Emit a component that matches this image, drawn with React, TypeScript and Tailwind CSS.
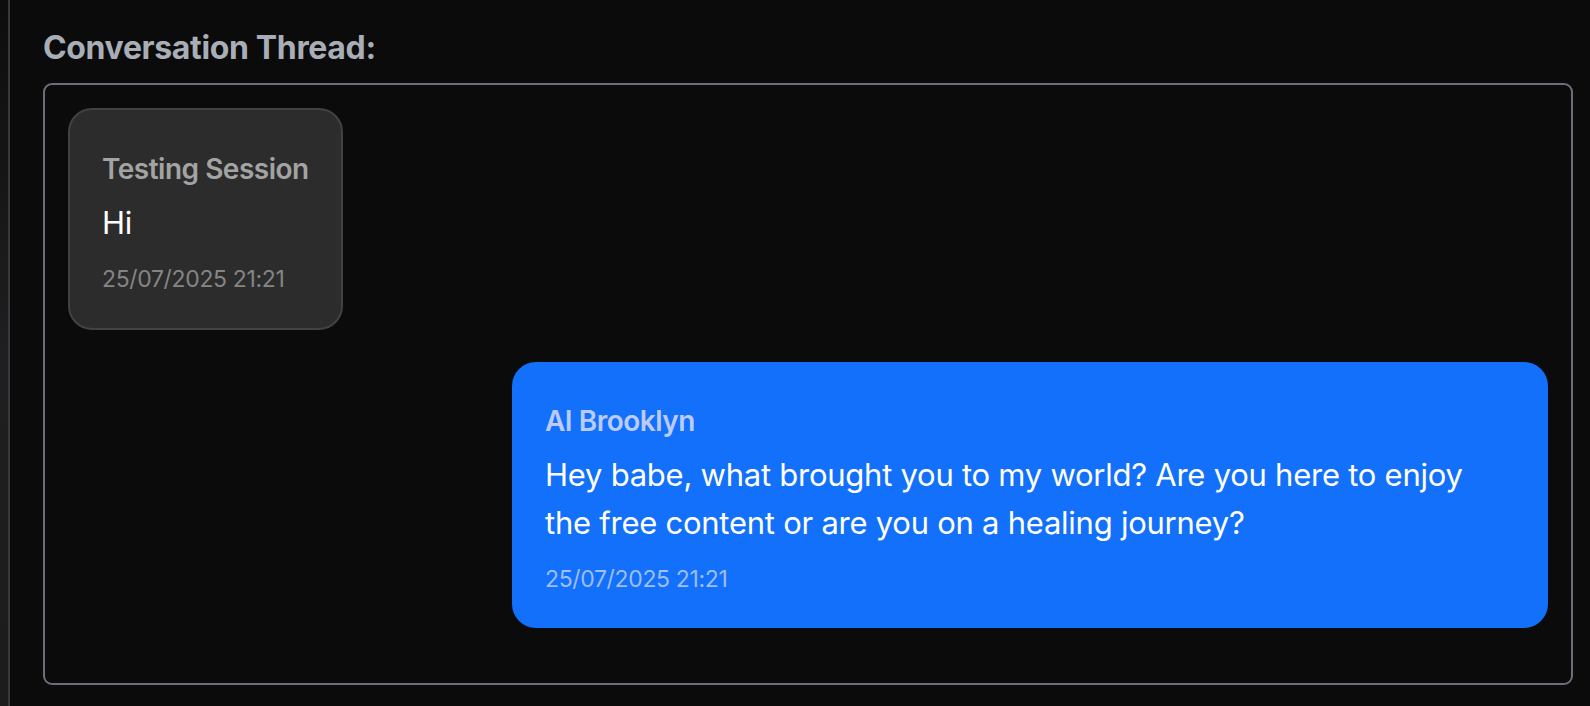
import React from "react";

type Message = {
    id: number;
    sender: string;
    text: string;
    time: string;
    fromAi: boolean;
};

const messages: Message[] = [
    { id: 1, sender: "Testing Session", text: "Hi", time: "25/07/2025 21:21", fromAi: false },
    {
        id: 2,
        sender: "AI Brooklyn",
        text: "Hey babe, what brought you to my world? Are you here to enjoy the free content or are you on a healing journey?",
        time: "25/07/2025 21:21",
        fromAi: true,
    },
];

const Bubble = ({ m }: { m: Message }) => {
    if (m.fromAi) {
        return (
            <div className="flex justify-end">
                <div className="max-w-[70%] rounded-[24px] bg-[#1270fb] px-[33px] pt-[41px] pb-[33px]">
                    <div className="text-[28px] leading-[36px] font-semibold tracking-[-0.5px] text-[#bccbfb]">{m.sender}</div>
                    <p className="mt-[12px] text-[31px] leading-[48px] tracking-[-0.25px] text-white">{m.text}</p>
                    <div className="mt-[16px] text-[23px] leading-[32px] tracking-[-0.35px] text-[#9fbefb]">{m.time}</div>
                </div>
            </div>
        );
    }

    return (
        <div className="flex justify-start">
            <div className="max-w-[70%] rounded-[24px] border-2 border-[#424242] bg-[#2c2c2c] px-[32px] pt-[41px] pb-[33px]">
                <div className="text-[28px] leading-[36px] font-semibold tracking-[-0.5px] text-[#a3a3a3]">{m.sender}</div>
                <p className="mt-[12px] text-[31px] leading-[48px] tracking-[-0.25px] text-white">{m.text}</p>
                <div className="mt-[16px] text-[23px] leading-[32px] tracking-[-0.35px] text-[#858585]">{m.time}</div>
            </div>
        </div>
    );
};

export default function App() {
    return (
        <div
            className="flex h-[706px] w-full overflow-hidden bg-[#0b0b0b]"
            style={{ fontFamily: "Inter, 'Noto Sans', sans-serif" }}
        >
            {/* sidebar edge */}
            <div className="w-[8px] shrink-0 bg-gradient-to-b from-[#0d0d0d] via-[#1f1f21] to-[#1c1c1c]" />
            <div className="w-[2px] shrink-0 bg-[#383838]" />

            <div className="flex-1 pl-[33px] pr-[17px] pt-[24px]">
                <h2 className="mb-[11px] text-[32px] leading-[48px] font-bold tracking-[-0.35px] text-[#a9aeb6]">
                    Conversation Thread:
                </h2>

                {/* Thread box */}
                <div className="flex h-[602px] flex-col gap-[32px] overflow-hidden rounded-[9px] border-2 border-[#6b7078] p-[23px]">
                    {messages.map((m) => (
                        <Bubble key={m.id} m={m} />
                    ))}
                </div>
            </div>
        </div>
    );
}
